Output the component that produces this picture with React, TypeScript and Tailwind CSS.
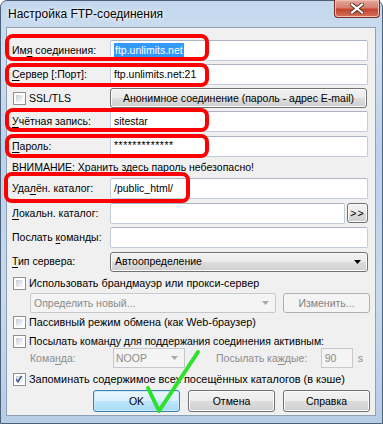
import React from 'react';

const font = "font-['Liberation_Sans',Arial,sans-serif] text-[10.5px] leading-none text-black";

const Check = ({ checked = false }: { checked?: boolean }) => (
  <span className="relative flex h-[13px] w-[13px] shrink-0 border border-[#8e8f8f] bg-white p-[2px]">
    <span className="block h-full w-full bg-[linear-gradient(135deg,#c9ccd2,#eef0f2_70%,#f8f8f8)]" />
    {checked && (
      <svg viewBox="0 0 13 13" className="absolute left-0 top-0 h-[11px] w-[11px]">
        <path d="M2.5 6.2 L4.8 9 L9 2.2" fill="none" stroke="#3f568f" strokeWidth="1.8" />
      </svg>
    )}
  </span>
);

const Field = ({ children, className = '' }: { children?: React.ReactNode; className?: string }) => (
  <div
    className={`flex h-[21px] items-center rounded-[2px] border border-[#c2ccd8] border-t-[#abb4c0] bg-white pl-[3px] ${className}`}
  >
    {children}
  </div>
);

const Btn = ({
  children,
  className = '',
  focused = false,
  disabled = false,
  left = false,
}: {
  children: React.ReactNode;
  className?: string;
  focused?: boolean;
  disabled?: boolean;
  left?: boolean;
}) => (
  <div
    className={`flex items-center rounded-[3px] border ${left ? 'justify-between' : 'justify-center'} ${
      disabled
        ? 'border-[#adb2b5] bg-[#f4f4f4] text-[#838383]'
        : focused
          ? 'border-[#3c7fb1] bg-[linear-gradient(#eaf6fd,#d9f0fc_50%,#bee6fd_50%,#a7d9f5)] shadow-[inset_0_0_0_1px_#cbeafb]'
          : 'border-[#707070] bg-[linear-gradient(#f2f2f2,#ebebeb_50%,#dddddd_50%,#cfcfcf)] shadow-[inset_0_0_0_1px_#fcfcfc]'
    } ${className}`}
  >
    {children}
  </div>
);

const Arrow = ({ color }: { color: string }) => (
  <svg width="7" height="4" viewBox="0 0 7 4" className="shrink-0">
    <path d="M0 0 H7 L3.5 4 Z" fill={color} />
  </svg>
);

const Row = ({ label, children, h }: { label: React.ReactNode; children: React.ReactNode; h: string }) => (
  <div className={`flex items-center pl-[5px] pr-[7px] ${h}`}>
    <div className="w-[98px] shrink-0">{label}</div>
    <div className="flex flex-1 items-center">{children}</div>
  </div>
);

const U = ({ children }: { children: React.ReactNode }) => (
  <span className="underline decoration-1 underline-offset-[2px]">{children}</span>
);

export default function App() {
  return (
    <div className={`relative flex h-[424px] w-[383px] flex-col overflow-hidden ${font}`}>
      {/* Aero frame */}
      <div className="absolute inset-0 rounded-t-[7px] border border-[#4d6079] bg-[linear-gradient(180deg,#c2d7ed,#cfe0f1_12%,#bcd2ea_35%,#c7daee_70%,#b7cde6)]" />

      {/* Title bar */}
      <div className="relative flex h-[27px] shrink-0 items-center pl-[8px]">
        <span className="font-['Liberation_Sans',Arial,sans-serif] text-[12px] [text-shadow:0_0_6px_#ffffff,0_0_3px_#ffffff]">
          Настройка FTP-соединения
        </span>
        <div className="absolute right-[3px] top-0 flex h-[18px] w-[46px] items-center justify-center rounded-b-[4px] border border-t-0 border-[#7a2b22] bg-[linear-gradient(#e8a79a,#d4806f_45%,#c4442f_55%,#d3725c)] shadow-[inset_0_0_0_1px_#eebfb3]">
          <svg width="14" height="11" viewBox="0 0 14 11">
            <path d="M2 1.5 L12 9.5 M12 1.5 L2 9.5" stroke="#5a2a24" strokeWidth="4" strokeLinecap="square" />
            <path d="M2 1.5 L12 9.5 M12 1.5 L2 9.5" stroke="#ffffff" strokeWidth="2.2" strokeLinecap="square" />
          </svg>
        </div>
      </div>

      {/* Client area */}
      <div className="relative mb-[8px] ml-[6px] mr-[7px] flex flex-1 flex-col border border-[#8ea0b5] bg-[#f0f0f0] pt-[10px]">
        <Row h="h-[24px]" label={<>Им<U>я</U> соединения:</>}>
          <Field className="flex-1">
            <span className="bg-[#3399ff] px-[1px] py-[2px] text-white">ftp.unlimits.net</span>
          </Field>
        </Row>
        <Row h="h-[25px]" label={<><U>С</U>ервер [:Порт]:</>}>
          <Field className="flex-1">ftp.unlimits.net:21</Field>
        </Row>
        <div className="flex h-[22px] items-center pl-[6px] pr-[8px]">
          <div className="flex w-[97px] items-center gap-[3px]">
            <Check />
            <span>SSL/TLS</span>
          </div>
          <Btn className="h-[20px] flex-1">Анонимное соединение (пароль - адрес E-mail)</Btn>
        </div>
        <Row h="h-[25px]" label={<><U>У</U>чётная запись:</>}>
          <Field className="flex-1">sitestar</Field>
        </Row>
        <Row h="h-[24px]" label={<><U>П</U>ароль:</>}>
          <Field className="flex-1 items-start pt-[3px] tracking-[0.5px]">*************</Field>
        </Row>
        <div className="flex h-[18px] items-center pl-[5px]">ВНИМАНИЕ: Хранить здесь пароль небезопасно!</div>
        <Row h="h-[25px]" label={<>Уда<U>л</U>ён. каталог:</>}>
          <Field className="flex-1">/public_html/</Field>
        </Row>
        <Row h="h-[24px]" label={<><U>Л</U>окальн. каталог:</>}>
          <Field className="flex-1" />
          <Btn className="ml-[2px] h-[20px] w-[21px] tracking-[1px]">&gt;&gt;</Btn>
        </Row>
        <Row h="h-[24px]" label={<>Послать <U>к</U>оманды:</>}>
          <Field className="flex-1" />
        </Row>
        <Row h="h-[25px]" label={<><U>Т</U>ип сервера:</>}>
          <Btn left className="h-[20px] flex-1 pl-[4px] pr-[6px]">
            <span>Автоопределение</span>
            <Arrow color="#000000" />
          </Btn>
        </Row>
        <div className="flex h-[18px] items-center gap-[3px] pl-[6px] text-[10.8px]">
          <Check />
          <span>Использовать брандмауэр или прокси-сервер</span>
        </div>
        <div className="flex h-[22px] items-center pl-[23px] pr-[5px]">
          <div className="flex h-[20px] w-[246px] items-center justify-between rounded-[2px] border border-[#c5c9cc] bg-[#f4f4f4] pl-[3px] pr-[6px] text-[#8a8a8a]">
            <span>Определить новый...</span>
            <Arrow color="#a8a8a8" />
          </div>
          <Btn disabled className="ml-auto h-[20px] w-[87px]">Изменить...</Btn>
        </div>
        <div className="flex h-[17px] items-center gap-[3px] pl-[6px] text-[10.8px]">
          <Check />
          <span>Пассивный режим обмена (как Web-браузер)</span>
        </div>
        <div className="flex h-[17px] items-center gap-[3px] pl-[6px] pt-[3px]">
          <Check />
          <span>Посылать команду для поддержания соединения активным:</span>
        </div>
        <div className="flex h-[20px] items-center pl-[23px] text-[#8d8d8d]">
          <span className="w-[83px]">
            Кома<U>н</U>да:
          </span>
          <div className="flex h-[20px] w-[72px] items-center justify-between border border-[#c5c9cc] bg-[#f4f4f4] pl-[2px] pr-[6px]">
            <span>NOOP</span>
            <Arrow color="#a8a8a8" />
          </div>
          <span className="ml-[31px]">
            Посылать ка<U>ж</U>дые:
          </span>
          <div className="ml-auto flex h-[20px] w-[32px] items-center border border-[#c5c9cc] bg-[#f4f4f4] pl-[3px]">90</div>
          <span className="ml-[5px] mr-[12px]">s</span>
        </div>
        <div className="flex h-[22px] items-center gap-[3px] pl-[6px] text-[10.9px]">
          <Check checked />
          <span>Запоминать содержимое всех посещённых каталогов (в кэше)</span>
        </div>
        <div className="flex h-[22px] justify-end gap-[8px] pr-[5px]">
          <Btn focused className="h-[22px] w-[87px]">OK</Btn>
          <Btn className="h-[22px] w-[87px]">Отмена</Btn>
          <Btn className="h-[22px] w-[87px]">Справка</Btn>
        </div>
      </div>

      {/* Annotations */}
      <div className="absolute left-[5px] top-[34px] h-[27px] w-[204px] rounded-[8px] border-4 border-[#ff0000]" />
      <div className="absolute left-[5px] top-[63px] h-[24px] w-[204px] rounded-[8px] border-4 border-[#ff0000]" />
      <div className="absolute left-[5px] top-[108px] h-[24px] w-[204px] rounded-[8px] border-4 border-[#ff0000]" />
      <div className="absolute left-[5px] top-[134px] h-[24px] w-[204px] rounded-[8px] border-4 border-[#ff0000]" />
      <div className="absolute left-[4px] top-[172px] h-[31px] w-[186px] rounded-[8px] border-4 border-[#ff0000]" />
      <svg className="absolute left-0 top-0" width="383" height="424">
        <path d="M148 388 L159 411 L198 352" fill="none" stroke="#2fe02f" strokeWidth="4" strokeLinecap="round" strokeLinejoin="round" />
      </svg>
    </div>
  );
}
